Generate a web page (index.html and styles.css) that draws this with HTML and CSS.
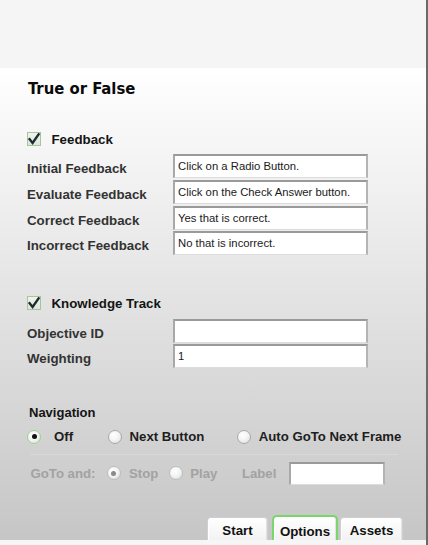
FILE: index.html
```html
<!DOCTYPE html>
<html>
<head>
<meta charset="utf-8">
<link rel="stylesheet" href="styles.css">
</head>
<body>
<div class="app">
  <div class="top"></div>
  <div class="panel">
    <h1 class="title">True or False</h1>

    <div class="check fb-check">
      <span class="box"><svg width="14" height="14" viewBox="0 0 14 14"><path d="M2.6 7.2 L5.6 11 L11.6 2.4" fill="none" stroke="#1d2a38" stroke-width="2.4" stroke-linecap="square" stroke-linejoin="miter"/></svg></span>
      <span class="check-text">Feedback</span>
    </div>
    <div class="rows">
      <div class="row"><span class="lbl">Initial Feedback</span><div class="field">Click on a Radio Button.</div></div>
      <div class="row"><span class="lbl">Evaluate Feedback</span><div class="field">Click on the Check Answer button.</div></div>
      <div class="row"><span class="lbl">Correct Feedback</span><div class="field">Yes that is correct.</div></div>
      <div class="row"><span class="lbl">Incorrect Feedback</span><div class="field">No that is incorrect.</div></div>
    </div>

    <div class="check kt-check">
      <span class="box"><svg width="14" height="14" viewBox="0 0 14 14"><path d="M2.6 7.2 L5.6 11 L11.6 2.4" fill="none" stroke="#1d2a38" stroke-width="2.4" stroke-linecap="square" stroke-linejoin="miter"/></svg></span>
      <span class="check-text">Knowledge Track</span>
    </div>
    <div class="rows kt-rows">
      <div class="row"><span class="lbl">Objective ID</span><div class="field"></div></div>
      <div class="row"><span class="lbl">Weighting</span><div class="field">1</div></div>
    </div>

    <div class="nav-title">Navigation</div>
    <div class="radios">
      <span class="radio on"></span><span class="rlbl off-lbl">Off</span>
      <span class="radio r-next"></span><span class="rlbl next-lbl">Next Button</span>
      <span class="radio r-auto"></span><span class="rlbl">Auto GoTo Next Frame</span>
    </div>
    <div class="sep"></div>
    <div class="goto">
      <span class="glbl">GoTo and:</span>
      <span class="radio dis on g-stop"></span><span class="glbl stop-lbl">Stop</span>
      <span class="radio dis g-play"></span><span class="glbl play-lbl">Play</span>
      <span class="glbl label-lbl">Label</span>
      <div class="field small"></div>
    </div>

    <div class="tabs">
      <div class="tab tab-start">Start</div>
      <div class="tab active">Options</div>
      <div class="tab tab-assets">Assets</div>
    </div>
  </div>
  <div class="strip"></div>
</div>
</body>
</html>
```

FILE: styles.css
```css
* { box-sizing: border-box; margin: 0; padding: 0; }
html, body { width: 428px; height: 545px; overflow: hidden; }
body { font-family: "Liberation Sans", Arial, sans-serif; background: #f5f5f5; }

.app {
  width: 428px;
  height: 545px;
  display: flex;
  flex-direction: column;
  border-right: 2px solid #6a6a6a;
}
.top { height: 68px; flex: none; background: #f5f5f5; }
.panel {
  flex: 1;
  display: flex;
  flex-direction: column;
  padding: 12px 0 0 27px;
  background: linear-gradient(#ffffff, #c6c6c6);
}
.strip { height: 5px; flex: none; background: #f6f6f6; }

.title {
  font-family: "DejaVu Sans", sans-serif;
  font-stretch: condensed;
  font-size: 16.5px;
  font-weight: bold;
  line-height: 18px;
  color: #0a0a0a;
  margin-left: 1px;
}

.check { display: flex; align-items: center; height: 14px; }
.fb-check { margin-top: 34px; }
.kt-check { margin-top: 41px; }
.box {
  width: 14px; height: 14px;
  border: 1px solid #a7c49e;
  background: linear-gradient(#eef5ea, #dce8d6);
  display: flex;
}
.box svg { display: block; margin: -1px; }
.check-text {
  margin-left: 10.5px;
  font-size: 13.3px;
  font-weight: bold;
  color: #141414;
}

.rows { display: flex; flex-direction: column; gap: 1.8px; margin-top: 8px; }
.kt-rows { margin-top: 8.5px; gap: 1px; }
.row { display: flex; height: 24px; }
.lbl {
  width: 146px;
  padding-top: 7px;
  font-size: 13.3px;
  font-weight: bold;
  color: #333;
  line-height: 16px;
}
.field {
  width: 195px;
  height: 24px;
  background: #fff;
  border-style: solid;
  border-width: 2px 2px 1px 2px;
  border-color: #9a9a9a #b4b4b4 #dcdcdc #a8a8a8;
  font-size: 11.3px;
  color: #1a1a1a;
  padding: 3px 0 0 3px;
  line-height: 15px;
}

.nav-title {
  margin-top: 37px;
  margin-left: 2px;
  font-size: 13px;
  font-weight: bold;
  color: #141414;
  line-height: 16px;
}
.radios { display: flex; align-items: center; height: 16px; margin-top: 8px; }
.radio {
  width: 14px; height: 14px;
  border-radius: 50%;
  border: 1px solid #a9a9a9;
  background: radial-gradient(circle at 40% 35%, #ffffff 0%, #f4f4f4 45%, #d8d8d8 100%);
  flex: none;
  display: flex;
  align-items: center;
  justify-content: center;
}
.radio.on { border-color: #9dcf93; box-shadow: 0 0 0 0.5px #c6e4bf; }
.radio.on::after {
  content: "";
  width: 5px; height: 5px;
  border-radius: 50%;
  background: #111;
}
.rlbl { font-size: 13.2px; font-weight: bold; color: #1e1e1e; }
.off-lbl { margin-left: 13px; }
.r-next { margin-left: 35px; }
.next-lbl { margin-left: 7.5px; }
.r-auto { margin-left: 32.5px; }
.r-auto + .rlbl { margin-left: 8px; }

.sep {
  height: 1px;
  margin: 9px 28px 0 3px;
  background: rgba(255,255,255,0.18);
}
.goto { display: flex; align-items: center; height: 23px; margin-top: 7px; }
.glbl { font-size: 13.2px; font-weight: bold; color: #a2a2a2; }
.goto > .glbl:first-child { margin-left: 3.5px; }
.g-stop { margin-left: 11.5px; }
.radio.dis { border-color: #bdbdbd; }
.radio.dis.on { box-shadow: none; border-color: #bcbcbc; }
.radio.dis.on::after { background: #8a8a8a; }
.stop-lbl { margin-left: 8px; }
.g-play { margin-left: 10.5px; }
.play-lbl { margin-left: 7.5px; }
.label-lbl { margin-left: 24.5px; }
.field.small { width: 96px; height: 23px; margin-left: 13px; }

.tabs {
  margin-top: auto;
  display: flex;
  align-items: flex-end;
  padding-left: 180px;
  height: 26px;
}
.tab {
  height: 23px;
  border: 1px solid #cfcfcf;
  border-bottom: none;
  border-radius: 4px 4px 0 0;
  background: linear-gradient(#ffffff, #f2f2f2);
  box-shadow: inset 1px 1px 0 #fff, inset -1px 0 0 #e2e2e2;
  font-size: 13.3px;
  font-weight: bold;
  color: #111;
  display: flex;
  align-items: center;
  justify-content: center;
  padding-top: 2px;
}
.tab-start { width: 61px; }
.active {
  width: 66px;
  height: 25px;
  margin-left: 4px;
  border: 2px solid #78d66a;
  border-bottom: none;
  border-radius: 5px 5px 0 0;
  padding-top: 6px;
}
.tab-assets { width: 63px; margin-left: 2px; }
```
